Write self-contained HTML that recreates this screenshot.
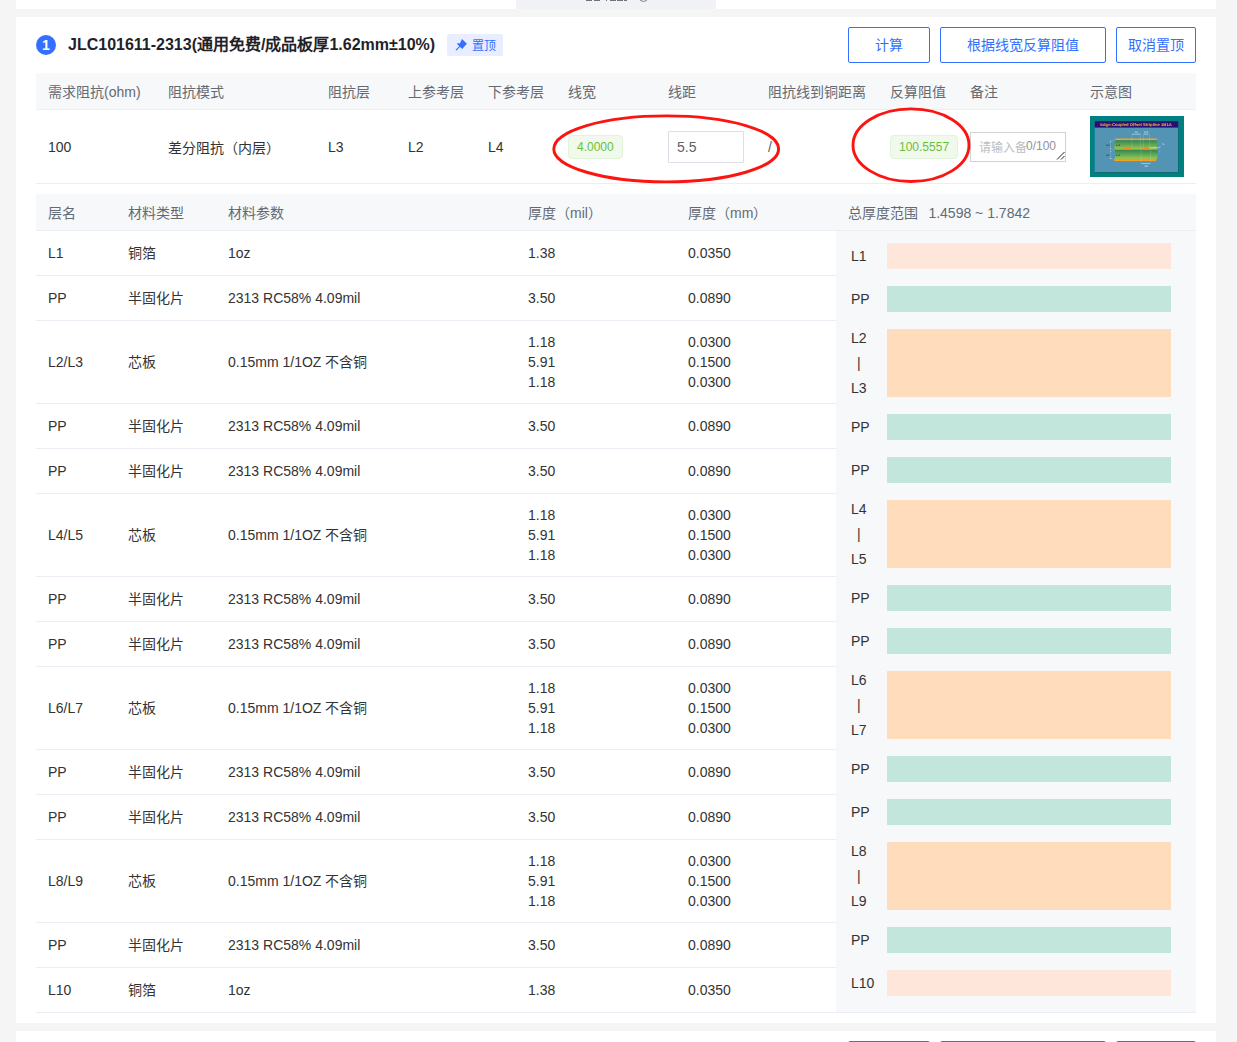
<!DOCTYPE html>
<html lang="zh-CN">
<head>
<meta charset="utf-8">
<title>阻抗计算</title>
<style>
*{box-sizing:border-box;margin:0;padding:0}
html,body{width:1237px;height:1042px;overflow:hidden}
body{background:#f5f5f5;font-family:"Liberation Sans",sans-serif;font-size:14px;color:#333;position:relative}
.abs{position:absolute}
.card{position:absolute;left:16px;width:1200px;background:#fff}
#topcard{top:0;height:9px}
#toptab{position:absolute;left:516px;top:0;width:200px;height:9px;background:#f0f2f5;overflow:hidden}
#toptab i{position:absolute;top:0;height:1px;background:#3a3d44;opacity:.7}
#toptab b{position:absolute;left:122.5px;top:-7px;width:9px;height:9px;border:1.3px solid #7a7f88;border-radius:50%}
#main{top:17px;height:1006px}
#botcard{top:1031px;height:40px}
.num{position:absolute;left:36px;top:35px;width:20px;height:20px;border-radius:50%;background:#3370ff;color:#fff;font-size:14px;font-weight:bold;line-height:20px;text-align:center}
.title{position:absolute;left:68px;top:33px;height:24px;line-height:24px;font-size:16px;font-weight:bold;color:#1f2329;white-space:nowrap}
.pin{position:absolute;left:447px;top:34px;width:56px;height:22px;border-radius:2px;background:#e8eeff;color:#3370ff;font-size:12px;line-height:22px;padding-left:24.7px;padding-top:0.5px;white-space:nowrap}
.pin svg{position:absolute;left:0;top:0;width:56px;height:22px}
.btn{position:absolute;top:27px;height:36px;border:1px solid #3370ff;border-radius:2px;background:#fff;color:#3370ff;font-size:14px;line-height:34px;text-align:center;white-space:nowrap}
table{border-collapse:separate;border-spacing:0;table-layout:fixed;position:absolute;left:36px;width:1160px}
th,td{text-align:left;padding:0 0 0 12px;font-weight:normal;vertical-align:middle;white-space:nowrap;overflow:visible}
th{background:#f7f8fa;color:#646a73;font-size:14px;padding-bottom:1px}
#t1{top:73px}
#t1 th{height:37px;border-bottom:1px solid #ebeef5}
#t1 td{height:74px;border-bottom:1px solid #ebeef5}
#t2{top:194px}
#t2 th{height:37px;border-bottom:1px solid #ebeef5}
#t2 td{height:45px;border-bottom:1px solid #ebeef5;line-height:20px}
#t2 tr.core td{height:83px}
.tag{display:inline-block;height:24px;line-height:22px;padding:0 8px;font-size:12px;color:#67c23a;background:#f0f9eb;border:1px solid #e1f3d8;border-radius:4px;vertical-align:middle}
.inp{display:inline-block;width:76px;height:32px;border:1px solid #dcdfe6;border-radius:1px;line-height:30px;padding-left:8px;color:#606266;font-size:14px;vertical-align:middle;background:#fff}
.ta{position:relative;display:inline-block;width:96px;height:30px;border:1px solid #d2d2d2;border-radius:0;vertical-align:middle;background:#fff;overflow:hidden}
.ta .ph{position:absolute;left:8px;top:5px;font-size:12px;line-height:20px;color:#bdbdbd;font-family:"Liberation Serif",serif;white-space:nowrap}
.ta .cnt{position:absolute;right:9px;top:3px;font-size:12px;line-height:20px;color:#909399;background:#fff}
.ta svg{position:absolute;right:0.5px;bottom:0.5px;width:9px;height:9px}
#panel{position:absolute;left:836px;top:231px;width:360px;height:781px;background:#f7f8fa}
.bar{position:absolute;left:51px;width:284px}
.b1{background:#ffe6da;height:26px}
.bp{background:#c2e5dc;height:26px}
.bc{background:#ffdcbc;height:68px}
.lb{position:absolute;left:15px;font-size:14px;line-height:25px;color:#333;text-align:center;white-space:nowrap}
.thumb{position:absolute;left:1090px;top:116px;width:94px;height:61px}
.thumb text{font-family:"Liberation Sans",sans-serif;text-rendering:geometricPrecision}
.ell{position:absolute;left:0;top:0;width:1237px;height:1042px;pointer-events:none}
</style>
</head>
<body>
<div class="card" id="topcard"></div>
<div id="toptab"><i style="left:70px;width:5.5px"></i><i style="left:77.5px;width:6.5px"></i><i style="left:90px;width:1px"></i><i style="left:94px;width:5.5px"></i><i style="left:101px;width:5.5px"></i><i style="left:107.5px;width:3.5px"></i><b></b></div>
<div class="card" id="main"></div>
<div class="card" id="botcard"></div>

<div class="num">1</div>
<div class="title">JLC101611-2313(通用免费/成品板厚1.62mm±10%)</div>
<div class="pin"><svg viewBox="0 0 56 22"><path d="M15 5.1 L19.9 9.7 L15.2 15 L12.6 12.5 L9.6 9.6 L13 9.2 Z" fill="#3370ff"/><path d="M12.8 12.4 L9.3 15.9" stroke="#3370ff" stroke-width="1.2" stroke-linecap="round"/></svg>置顶</div>
<div class="btn" style="left:848px;width:82px">计算</div>
<div class="btn" style="left:940px;width:166px">根据线宽反算阻值</div>
<div class="btn" style="left:1116px;width:80px">取消置顶</div>

<table id="t1">
<colgroup><col style="width:120px"><col style="width:160px"><col style="width:80px"><col style="width:80px"><col style="width:80px"><col style="width:100px"><col style="width:100px"><col style="width:122px"><col style="width:80px"><col style="width:120px"><col style="width:118px"></colgroup>
<tr><th>需求阻抗(ohm)</th><th>阻抗模式</th><th>阻抗层</th><th>上参考层</th><th>下参考层</th><th>线宽</th><th>线距</th><th>阻抗线到铜距离</th><th>反算阻值</th><th>备注</th><th>示意图</th></tr>
<tr><td>100</td><td>差分阻抗（内层）</td><td>L3</td><td>L2</td><td>L4</td><td><span class="tag">4.0000</span></td><td><span class="inp">5.5</span></td><td style="color:#606266">/</td><td><span class="tag">100.5557</span></td><td><span class="ta"><span class="ph">请输入备注</span><span class="cnt">0/100</span><svg viewBox="0 0 9 9"><path d="M1 8.5 L8.5 1 M5 8.5 L8.5 5" stroke="#222" stroke-width="1" fill="none"/></svg></span></td><td></td></tr>
</table>

<table id="t2">
<colgroup><col style="width:80px"><col style="width:100px"><col style="width:300px"><col style="width:160px"><col style="width:160px"><col style="width:360px"></colgroup>
<tr><th>层名</th><th>材料类型</th><th>材料参数</th><th>厚度（mil）</th><th>厚度（mm）</th><th>总厚度范围<span style="margin-left:10.4px">1.4598 ~ 1.7842</span></th></tr>
<tr><td>L1</td><td>铜箔</td><td>1oz</td><td>1.38</td><td>0.0350</td><td></td></tr>
<tr><td>PP</td><td>半固化片</td><td>2313 RC58% 4.09mil</td><td>3.50</td><td>0.0890</td><td></td></tr>
<tr class="core"><td>L2/L3</td><td>芯板</td><td>0.15mm 1/1OZ 不含铜</td><td>1.18<br>5.91<br>1.18</td><td>0.0300<br>0.1500<br>0.0300</td><td></td></tr>
<tr><td>PP</td><td>半固化片</td><td>2313 RC58% 4.09mil</td><td>3.50</td><td>0.0890</td><td></td></tr>
<tr><td>PP</td><td>半固化片</td><td>2313 RC58% 4.09mil</td><td>3.50</td><td>0.0890</td><td></td></tr>
<tr class="core"><td>L4/L5</td><td>芯板</td><td>0.15mm 1/1OZ 不含铜</td><td>1.18<br>5.91<br>1.18</td><td>0.0300<br>0.1500<br>0.0300</td><td></td></tr>
<tr><td>PP</td><td>半固化片</td><td>2313 RC58% 4.09mil</td><td>3.50</td><td>0.0890</td><td></td></tr>
<tr><td>PP</td><td>半固化片</td><td>2313 RC58% 4.09mil</td><td>3.50</td><td>0.0890</td><td></td></tr>
<tr class="core"><td>L6/L7</td><td>芯板</td><td>0.15mm 1/1OZ 不含铜</td><td>1.18<br>5.91<br>1.18</td><td>0.0300<br>0.1500<br>0.0300</td><td></td></tr>
<tr><td>PP</td><td>半固化片</td><td>2313 RC58% 4.09mil</td><td>3.50</td><td>0.0890</td><td></td></tr>
<tr><td>PP</td><td>半固化片</td><td>2313 RC58% 4.09mil</td><td>3.50</td><td>0.0890</td><td></td></tr>
<tr class="core"><td>L8/L9</td><td>芯板</td><td>0.15mm 1/1OZ 不含铜</td><td>1.18<br>5.91<br>1.18</td><td>0.0300<br>0.1500<br>0.0300</td><td></td></tr>
<tr><td>PP</td><td>半固化片</td><td>2313 RC58% 4.09mil</td><td>3.50</td><td>0.0890</td><td></td></tr>
<tr><td>L10</td><td>铜箔</td><td>1oz</td><td>1.38</td><td>0.0350</td><td></td></tr>
</table>

<div id="panel">
<!--PANEL-->
<div class="bar b1" style="top:12px"></div>
<div class="lb" style="top:12.5px">L1</div>
<div class="bar bp" style="top:55px"></div>
<div class="lb" style="top:55.5px">PP</div>
<div class="bar bc" style="top:98px"></div>
<div class="lb" style="top:94.5px">L2<br>|<br>L3</div>
<div class="bar bp" style="top:183px"></div>
<div class="lb" style="top:183.5px">PP</div>
<div class="bar bp" style="top:226px"></div>
<div class="lb" style="top:226.5px">PP</div>
<div class="bar bc" style="top:269px"></div>
<div class="lb" style="top:265.5px">L4<br>|<br>L5</div>
<div class="bar bp" style="top:354px"></div>
<div class="lb" style="top:354.5px">PP</div>
<div class="bar bp" style="top:397px"></div>
<div class="lb" style="top:397.5px">PP</div>
<div class="bar bc" style="top:440px"></div>
<div class="lb" style="top:436.5px">L6<br>|<br>L7</div>
<div class="bar bp" style="top:525px"></div>
<div class="lb" style="top:525.5px">PP</div>
<div class="bar bp" style="top:568px"></div>
<div class="lb" style="top:568.5px">PP</div>
<div class="bar bc" style="top:611px"></div>
<div class="lb" style="top:607.5px">L8<br>|<br>L9</div>
<div class="bar bp" style="top:696px"></div>
<div class="lb" style="top:696.5px">PP</div>
<div class="bar b1" style="top:739px"></div>
<div class="lb" style="top:739.5px">L10</div>
<!--/PANEL-->
</div>

<!--THUMB-->
<svg class="thumb" viewBox="0 0 94 61" preserveAspectRatio="none">
<defs>
<linearGradient id="g1" x1="0" y1="0" x2="0" y2="1"><stop offset="0" stop-color="#2e8752"/><stop offset="0.45" stop-color="#5fa552"/><stop offset="1" stop-color="#a8c84f"/></linearGradient>
<filter id="bl" x="-5%" y="-5%" width="110%" height="110%"><feGaussianBlur stdDeviation="0.32"/></filter>
</defs>
<rect width="94" height="61" fill="#008080"/>
<g filter="url(#bl)">
<rect x="5.3" y="5.7" width="83.4" height="51" fill="#05605f"/>
<rect x="4.7" y="5.1" width="83.4" height="51" fill="#5294b4"/>
<rect x="4.7" y="5.1" width="83.4" height="6.5" fill="#2a0f78"/>
<text transform="translate(46 9.9) scale(0.1)" font-weight="bold" font-size="42" fill="#e3bd2a" text-anchor="middle" textLength="715" lengthAdjust="spacingAndGlyphs">Edge-Coupled Offset Stripline 1B1A</text>
<rect x="25.3" y="22.5" width="41.8" height="1.8" fill="#f4a11e"/>
<path d="M25.3 24.2 H67 Q66.4 29 67 33.8 H24.9 Q23.2 29 25.3 24.2 Z" fill="url(#g1)"/>
<path d="M24.9 33.8 H67.2 Q69.2 38.6 66.4 43.5 H24.4 Q25.8 38.6 24.9 33.8 Z" fill="url(#g1)"/>
<path d="M32.8 33.8 Q33.4 31.6 35.2 31.6 L39 31.6 Q40.9 31.6 41.5 33.8 Z" fill="#f4861f"/>
<path d="M51.7 33.8 Q52.3 31.6 54.1 31.6 L57.8 31.6 Q59.6 31.6 60.2 33.8 Z" fill="#f4861f"/>
<rect x="24.4" y="43.3" width="41.9" height="1.8" fill="#f4a11e"/>
<g stroke="#eef3f6" stroke-width="0.55" fill="none" opacity="0.9">
<path d="M42 18.2 H50.3 M53.5 18.2 H58.4"/>
<path d="M51.5 47.5 H60.2"/>
<path d="M60.2 31.7 H69.6 L70.2 30.2"/>
</g>
<g fill="#f2f6f8" opacity="0.9">
<circle cx="20.6" cy="25.3" r="0.55"/><circle cx="20.6" cy="32.5" r="0.5"/><circle cx="20.6" cy="35.2" r="0.5"/><circle cx="20.6" cy="42.4" r="0.55"/>
</g>
<g stroke="#dfe9ee" stroke-width="0.3" opacity="0.55" fill="none">
<path d="M41.8 18.2 V33 M50.4 18.2 V33 M53.3 18.2 V33 M59.6 18.2 V33 M51.2 33 V47.5 M60.6 33 V47.5"/>
<path d="M20.6 25.3 L25 24.3 M20.6 25.3 V32.5 M20.6 35.2 V42.4 M20.6 42.4 L24.5 43.6 M20.6 33.8 H24.5"/>
<path d="M68.5 34.5 L69.8 35.2 V37.5"/>
</g>
<g font-size="27" fill="#1a2a30">
<text transform="translate(16 29.5) scale(0.1)">H2</text><text transform="translate(16 39.7) scale(0.1)">H1</text>
<text transform="translate(26.1 29.5) scale(0.1)">Er2</text><text transform="translate(26.1 39.7) scale(0.1)">Er1</text>
</g>
<g font-size="27" fill="#f0f5f8" opacity="0.85">
<text transform="translate(44.7 16.6) scale(0.1)">S1</text><text transform="translate(54.1 16.6) scale(0.1)">W2</text><text transform="translate(71.3 29) scale(0.1)">T1</text><text transform="translate(54.4 50.9) scale(0.1)">W1</text>
</g>
</g>
</svg>
<!--/THUMB-->
<!--ELLIPSES-->
<svg class="ell" viewBox="0 0 1237 1042">
<ellipse cx="666.2" cy="148.9" rx="112.4" ry="33" fill="none" stroke="#fc1510" stroke-width="2.9"/>
<ellipse cx="911" cy="145.2" rx="58" ry="36.3" fill="none" stroke="#fc1510" stroke-width="2.9"/>
</svg>
<!--/ELLIPSES-->
<!--BOTBTNS-->
<div class="btn" style="top:1041px;left:848px;width:82px">计算</div>
<div class="btn" style="top:1041px;left:940px;width:166px">根据线宽反算阻值</div>
<div class="btn" style="top:1041px;left:1116px;width:80px">取消置顶</div>
<!--/BOTBTNS-->
</body>
</html>
